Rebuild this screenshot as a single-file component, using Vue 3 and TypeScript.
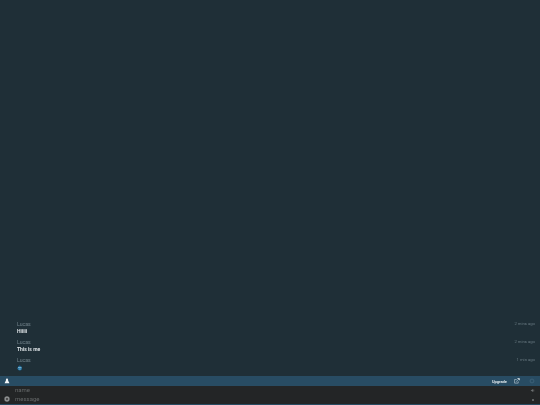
<script setup lang="ts">
interface Msg { id: number; user: string; text: string; time: string; emoji?: boolean }
const messages: Msg[] = [
  { id: 1, user: 'Lucas', text: 'Hiiiii', time: '2 mins ago' },
  { id: 2, user: 'Lucas', text: 'This is me', time: '2 mins ago' },
  { id: 3, user: 'Lucas', text: '', time: '1 min ago', emoji: true },
]
</script>

<template>
  <div class="app">
    <div class="messages">
      <div v-for="m in messages" :key="m.id" class="msg">
        <div class="head">
          <span class="user">{{ m.user }}</span>
          <span class="time">{{ m.time }}</span>
        </div>
        <div class="body">
          <svg v-if="m.emoji" class="emoji" viewBox="0 0 16 16">
            <circle cx="8" cy="8.5" r="6.5" fill="#1f6f9e" />
            <rect x="3" y="6" width="10" height="2" fill="#9cc8de" />
            <path d="M5 11 H11" stroke="#bfe0f0" stroke-width="1.6" />
            <path d="M6 2 L8 0.5 L10 2" stroke="#1f6f9e" stroke-width="1.5" fill="none" />
          </svg>
          <template v-else>{{ m.text }}</template>
        </div>
      </div>
    </div>
    <div class="bar">
      <svg class="user-icon" viewBox="0 0 10 10">
        <path d="M5 1 C6.2 1 6.8 2 6.8 3.2 C6.8 4.4 7 5.4 8 6.4 L9 8.6 H1 L2 6.4 C3 5.4 3.2 4.4 3.2 3.2 C3.2 2 3.8 1 5 1 Z" fill="#f2f6f8" />
      </svg>
      <span class="spacer"></span>
      <span class="upgrade">Upgrade</span>
      <svg class="popout" viewBox="0 0 10 10">
        <path d="M7 5.5 V8.5 H1 V2.5 H4.5" fill="none" stroke="#c3d2da" stroke-width="1" />
        <path d="M5 0.5 H9.5 V4 Z" fill="#eef4f7" />
        <path d="M3.5 6 L7 3" stroke="#c3d2da" stroke-width="1" />
      </svg>
      <svg class="gear" viewBox="0 0 10 10">
        <circle cx="5" cy="5" r="3.2" fill="none" stroke="#456a80" stroke-width="1.1" />
      </svg>
    </div>
    <div class="inputs">
      <div class="side">
        <svg class="settings" viewBox="0 0 10 10">
          <circle cx="5" cy="5" r="4.4" fill="#8b8d8d" />
          <circle cx="5" cy="5" r="1.7" fill="#3a3a3a" />
        </svg>
      </div>
      <div class="fields">
        <div class="row">
          <input class="field" placeholder="name" />
          <svg class="act" viewBox="0 0 8 8">
            <path d="M1 4 L5 1.5 V6.5 Z" fill="#6b6e6f" />
            <path d="M6 2.5 V5.5" stroke="#6b6e6f" />
          </svg>
        </div>
        <div class="row">
          <input class="field" placeholder="message" />
          <span class="dot"></span>
        </div>
      </div>
    </div>
    <div class="edge"></div>
  </div>
</template>

<style scoped>
.app {
  width: 540px;
  height: 405px;
  display: flex;
  flex-direction: column;
  background: #1f2f37;
  font-family: Roboto, "Liberation Sans", sans-serif;
  overflow: hidden;
}
.messages {
  flex: 1;
  display: flex;
  flex-direction: column;
  justify-content: flex-end;
  padding: 0 5px 3px 17px;
  will-change: transform;
}
.msg {
  height: 18px;
}
.head {
  display: flex;
  justify-content: space-between;
  align-items: center;
  height: 9px;
}
.user {
  font-size: 5.2px;
  color: #71828a;
}
.time {
  font-size: 4.2px;
  color: #66777f;
}
.body {
  height: 9px;
  font-size: 5px;
  font-weight: 700;
  line-height: 7px;
  color: #dfe4e7;
}
.emoji {
  display: block;
  width: 5.5px;
  height: 6px;
  margin-top: 1px;
}
.bar {
  height: 10px;
  flex: none;
  display: flex;
  align-items: center;
  background: #284c63;
  padding: 0 5px 0 4px;
  will-change: transform;
}
.user-icon {
  width: 6px;
  height: 6px;
}
.spacer {
  flex: 1;
}
.upgrade {
  font-size: 4px;
  font-weight: 700;
  color: #dbe4e9;
}
.popout {
  width: 6px;
  height: 6px;
  margin-left: 7px;
}
.gear {
  width: 6px;
  height: 6px;
  margin-left: 9px;
}
.inputs {
  height: 18px;
  flex: none;
  display: flex;
  background: #232526;
  will-change: transform;
}
.side {
  width: 15px;
  display: flex;
  align-items: flex-end;
  padding: 0 0 2px 4px;
  box-sizing: border-box;
}
.settings {
  width: 6px;
  height: 6px;
}
.fields {
  flex: 1;
  display: flex;
  flex-direction: column;
}
.row {
  height: 9px;
  display: flex;
  align-items: center;
  padding-right: 5px;
}
.field {
  flex: 1;
  min-width: 0;
  height: 7px;
  margin-bottom: 2px;
  padding: 0;
  border: 0;
  outline: 0;
  background: transparent;
  font-family: inherit;
  font-size: 6px;
  color: #ccc;
}
.field::placeholder {
  color: #646768;
  opacity: 1;
}
.act {
  width: 5px;
  height: 5px;
}
.dot {
  width: 2px;
  height: 2px;
  margin-right: 1px;
  background: #5d6061;
}
.edge {
  height: 1px;
  flex: none;
  background: #284c63;
}
</style>
